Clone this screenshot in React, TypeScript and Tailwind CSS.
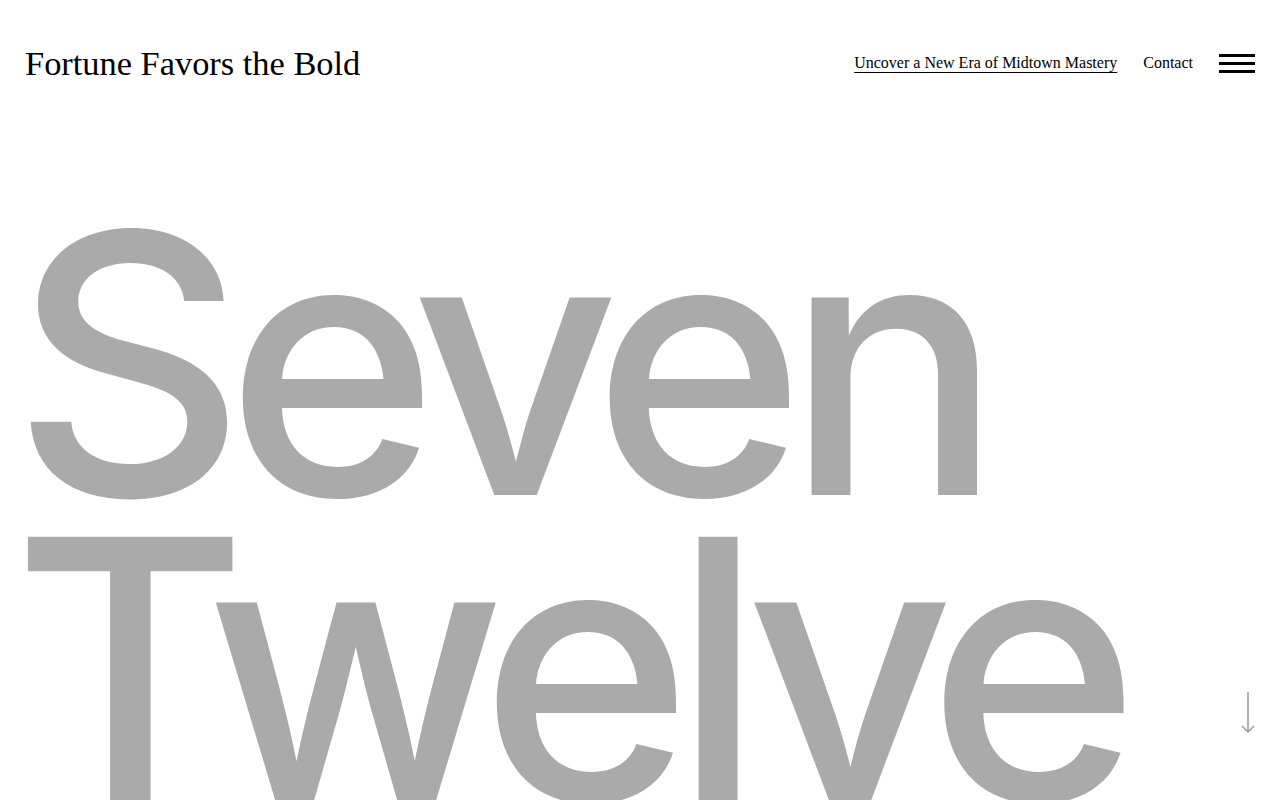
export default function App() {
  return (
    <div className="relative h-screen w-full overflow-hidden bg-white text-black">
      <header className="flex h-[126px] items-center justify-between px-[25px] font-['Liberation_Serif',serif]">
        <h1 className="text-[34.4px] leading-none">Fortune Favors the Bold</h1>
        <nav className="flex items-center gap-[26px] text-[16px]">
          <a href="#" className="underline decoration-1 underline-offset-[4px]">
            Uncover a New Era of Midtown Mastery
          </a>
          <a href="#">Contact</a>
          <button className="flex w-[36px] flex-col gap-[5px]" aria-label="Menu">
            <span className="h-[3px] w-full bg-black" />
            <span className="h-[3px] w-full bg-black" />
            <span className="h-[3px] w-full bg-black" />
          </button>
        </nav>
      </header>
      <main className="mt-[85px] pl-[12px] font-['Inter',sans-serif] text-[362px] font-medium leading-[305px] tracking-[-20px] text-[#aaaaaa]">
        <div>Seven</div>
        <div>Twelve</div>
      </main>
      <div className="absolute bottom-[66px] right-[24px] text-[#999999]">
        <svg width="16" height="42" viewBox="0 0 16 42" fill="none" stroke="currentColor" strokeWidth="1.5">
          <path d="M8 0 V40" />
          <path d="M2 34 L8 40 L14 34" />
        </svg>
      </div>
    </div>
  );
}
